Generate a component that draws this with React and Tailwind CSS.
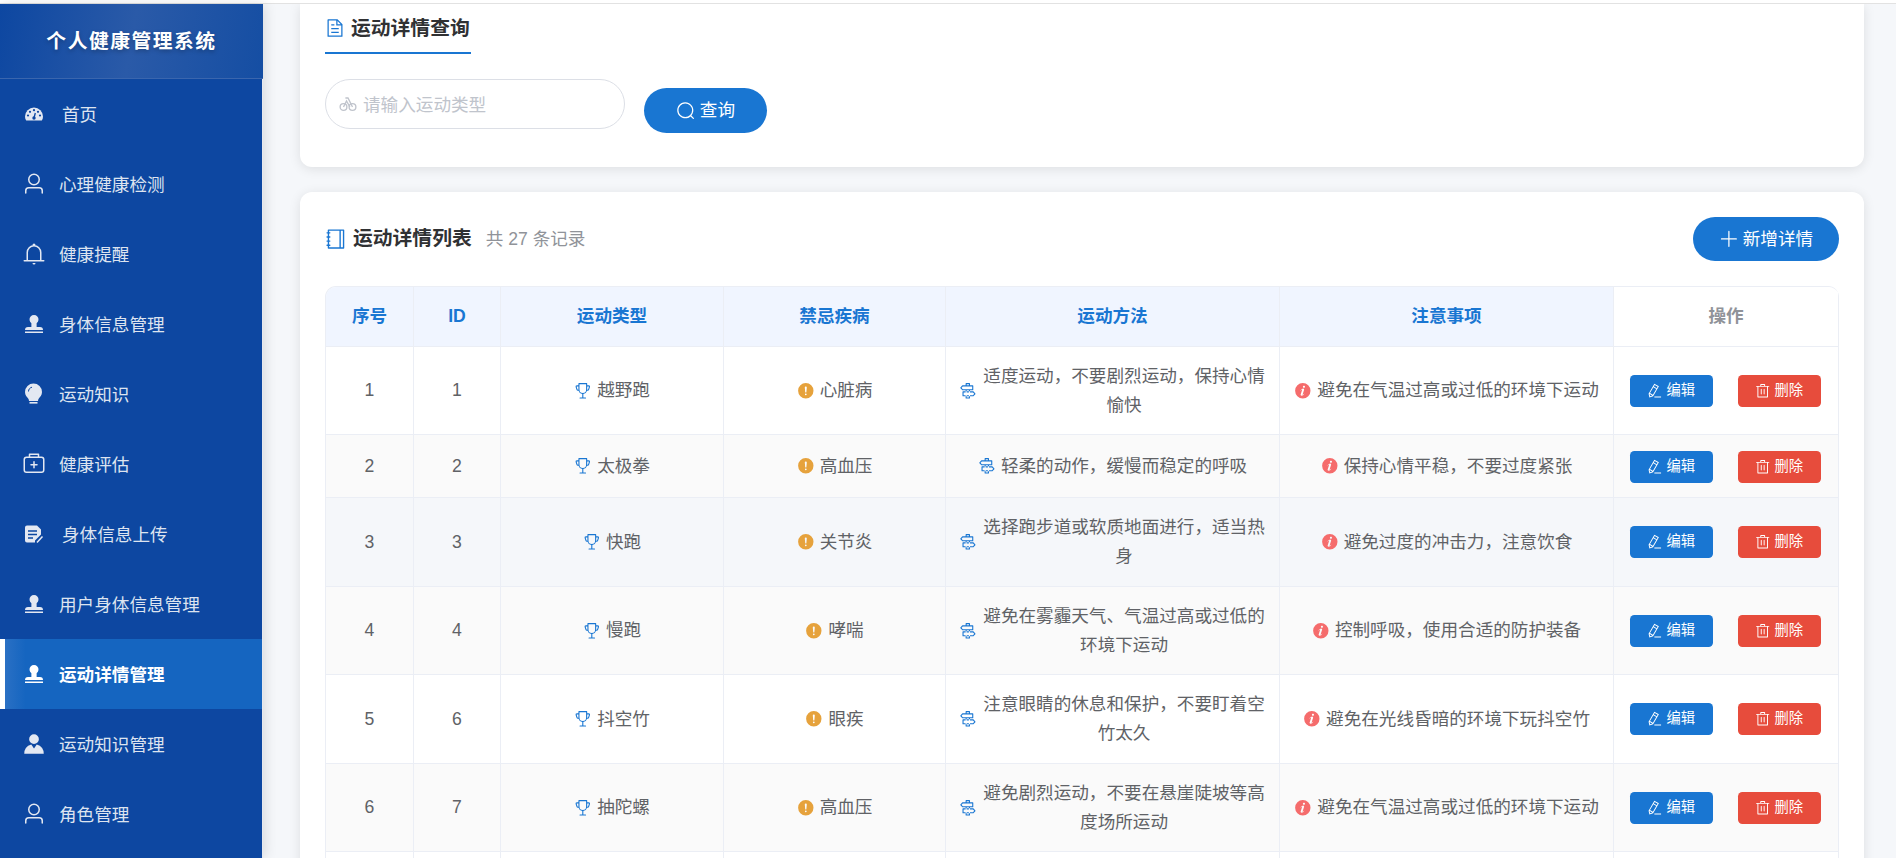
import React from 'react';

const I = {
  search: 'm795.904 750.72 124.992 124.928a32 32 0 0 1-45.248 45.248L750.656 795.904a416 416 0 1 1 45.248-45.248zM480 832a352 352 0 1 0 0-704 352 352 0 0 0 0 704z',
  plus: 'M480 480V128a32 32 0 0 1 64 0v352h352a32 32 0 1 1 0 64H544v352a32 32 0 1 1-64 0V544H128a32 32 0 0 1 0-64h352z',
  user: 'M512 512a192 192 0 1 0 0-384 192 192 0 0 0 0 384zm0 64a256 256 0 1 1 0-512 256 256 0 0 1 0 512zm320 320v-96a96 96 0 0 0-96-96H288a96 96 0 0 0-96 96v96a32 32 0 1 1-64 0v-96a160 160 0 0 1 160-160h448a160 160 0 0 1 160 160v96a32 32 0 1 1-64 0z',
  bell: 'M512 64a64 64 0 0 1 64 64v64H448v-64a64 64 0 0 1 64-64zM256 768h512V448a256 256 0 1 0-512 0v320zm256-640a320 320 0 0 1 320 320v384H192V448a320 320 0 0 1 320-320zM96 768h832q32 0 32 32t-32 32H96q-32 0-32-32t32-32zm352 128h128a64 64 0 0 1-128 0z',
  stamp: 'M624 475.968V640h144a128 128 0 0 1 128 128H128a128 128 0 0 1 128-128h144V475.968a192 192 0 1 1 224 0zM128 896v-64h768v64H128z',
  kit: 'M192 256a64 64 0 0 0-64 64v448a64 64 0 0 0 64 64h640a64 64 0 0 0 64-64V320a64 64 0 0 0-64-64H192zm0-64h640a128 128 0 0 1 128 128v448a128 128 0 0 1-128 128H192A128 128 0 0 1 64 768V320a128 128 0 0 1 128-128zM544 512h96a32 32 0 0 1 0 64h-96v96a32 32 0 0 1-64 0v-96h-96a32 32 0 0 1 0-64h96v-96a32 32 0 0 1 64 0v96zM352 128v64h320v-64H352zm-32-64h384a32 32 0 0 1 32 32v128a32 32 0 0 1-32 32H320a32 32 0 0 1-32-32V96a32 32 0 0 1 32-32z',
  avatar: 'M628.736 528.896A416 416 0 0 1 928 928H96a415.872 415.872 0 0 1 299.264-399.104L512 704l116.736-175.104zM720 304a208 208 0 1 1-416 0 208 208 0 0 1 416 0z',
  doc: 'M832 384H576V128H192v768h640V384zm-26.496-64L640 154.496V320h165.504zM160 64h480l256 256v608a32 32 0 0 1-32 32H160a32 32 0 0 1-32-32V96a32 32 0 0 1 32-32zm160 448h384v64H320v-64zm0-192h160v64H320v-64zm0 384h384v64H320v-64z',
  notebook: 'M192 128v768h640V128H192zm-32-64h704a32 32 0 0 1 32 32v832a32 32 0 0 1-32 32H160a32 32 0 0 1-32-32V96a32 32 0 0 1 32-32zM672 128h64v768h-64zM96 192h128q32 0 32 32t-32 32H96q-32 0-32-32t32-32zm0 192h128q32 0 32 32t-32 32H96q-32 0-32-32t32-32zm0 192h128q32 0 32 32t-32 32H96q-32 0-32-32t32-32zm0 192h128q32 0 32 32t-32 32H96q-32 0-32-32t32-32z',
  trophy: 'M480 896V702.08A256.256 256.256 0 0 1 264.064 512h-32.64a96 96 0 0 1-91.968-68.416L93.632 290.88a76.8 76.8 0 0 1 73.6-98.88H256V96a32 32 0 0 1 32-32h448a32 32 0 0 1 32 32v96h88.768a76.8 76.8 0 0 1 73.6 98.88L884.48 443.52A96 96 0 0 1 792.576 512h-32.64A256.256 256.256 0 0 1 544 702.08V896h128a32 32 0 1 1 0 64H352a32 32 0 1 1 0-64h128zm224-448V128H320v320a192 192 0 1 0 384 0zm64 0h24.576a32 32 0 0 0 30.656-22.784l45.824-152.768A12.8 12.8 0 0 0 856.768 256H768v192zm-512 0V256h-88.768a12.8 12.8 0 0 0-12.288 16.448l45.824 152.768A32 32 0 0 0 231.424 448H256z',
  warn: 'M512 64a448 448 0 1 1 0 896 448 448 0 0 1 0-896zm0 192a58.432 58.432 0 0 0-58.24 63.744l23.36 256.384a35.072 35.072 0 0 0 69.76 0l23.296-256.384A58.432 58.432 0 0 0 512 256zm0 512a51.2 51.2 0 1 0 0-102.4 51.2 51.2 0 0 0 0 102.4z',
  info: 'M512 64a448 448 0 1 1-.001 895.999A448 448 0 0 1 512 64zm67.2 275.072c33.28 0 60.288-23.104 60.288-57.344s-27.072-57.344-60.288-57.344c-33.28 0-60.16 23.104-60.16 57.344s26.88 57.344 60.16 57.344zM590.912 699.2c0-6.848 2.368-24.64 1.024-34.752l-52.608 60.544c-10.88 11.456-24.512 19.392-30.912 17.28a12.992 12.992 0 0 1-8.256-14.72l87.68-276.992c7.168-35.136-12.544-67.2-54.336-71.296-44.096 0-108.992 44.736-148.48 101.504 0 6.784-1.28 23.68.064 33.792l52.544-60.608c10.88-11.328 23.552-19.328 29.952-17.152a12.8 12.8 0 0 1 7.808 16.128L388.48 728.576c-10.048 32.256 8.96 63.872 55.104 71.04 67.904 0 108-43.68 147.456-100.416z',
  guide: 'M640 608h-64V416h64v192zm0 160v160a32 32 0 0 1-32 32H416a32 32 0 0 1-32-32V768h64v128h128V768h64zM384 608V416h64v192h-64zm256-352h-64V128H448v128h-64V96a32 32 0 0 1 32-32h192a32 32 0 0 1 32 32v160zM220.8 256l-71.232 80 71.168 80H768V256H220.8zm-14.4-64H800a32 32 0 0 1 32 32v224a32 32 0 0 1-32 32H206.4a32 32 0 0 1-23.936-10.752l-99.584-112a32 32 0 0 1 0-42.496l99.584-112A32 32 0 0 1 206.4 192zm678.784 496-71.104 80H266.816V608h547.2l71.168 80zm-56.768-144H234.88a32 32 0 0 0-32 32v224a32 32 0 0 0 32 32h593.6a32 32 0 0 0 23.936-10.752l99.584-112a32 32 0 0 0 0-42.496l-99.584-112A32 32 0 0 0 828.48 544z',
  pen: 'm199.04 672.64 193.984 112 224-387.968-193.92-112-224 388.032zm-23.872 60.16 32.896 148.288 144.896-45.696L175.168 732.8zM455.04 229.248l193.92 112 56.704-98.112-193.984-112-56.64 98.112zM104.32 708.8l384-665.024 304.768 175.936L409.152 884.8h.064l-248.448 78.336L104.32 708.8zm384 254.272v-64h448v64h-448z',
  trash: 'M160 256H96a32 32 0 0 1 0-64h256V95.936a32 32 0 0 1 32-32h256a32 32 0 0 1 32 32V192h256a32 32 0 1 1 0 64h-64v672a32 32 0 0 1-32 32H192a32 32 0 0 1-32-32V256zm448-64v-64H416v64h192zM224 896h576V256H224v640zm192-128a32 32 0 0 1-32-32V416a32 32 0 0 1 64 0v320a32 32 0 0 1-32 32zm192 0a32 32 0 0 1-32-32V416a32 32 0 0 1 64 0v320a32 32 0 0 1-32 32z',
};

const Ico = ({ d, className }) => (
  <svg viewBox="0 0 1024 1024" fill="currentColor" className={className}>
    <path d={d} />
  </svg>
);

const Gauge = () => (
  <svg viewBox="0 0 24 24" className="w-[24px] h-[24px] shrink-0">
    <path fill="#e3e8f2" d="M12 5.500A9 9 0 0 0 3 14.500c0 1.600.4 2.900 1.200 4h15.600c.8-1.100 1.200-2.400 1.200-4a9 9 0 0 0-9-9z" />
    <g fill="#0d47a1">
      <circle cx="6" cy="13.500" r="1.100" />
      <circle cx="8" cy="9.800" r="1.100" />
      <circle cx="12" cy="8.200" r="1.100" />
      <circle cx="16" cy="9.800" r="1.100" />
      <circle cx="18" cy="13.500" r="1.100" />
      <circle cx="12" cy="16" r="1.700" />
    </g>
    <path d="M12 16l1.300-5" stroke="#0d47a1" strokeWidth="1.300" />
  </svg>
);

const Bulb = () => (
  <svg viewBox="0 0 24 24" className="w-[24px] h-[24px] shrink-0">
    <path fill="#e3e8f2" d="M11.500 1.500A8.500 8.500 0 0 0 3 10c0 3.200 2 5 3.200 6.500.6.800.8 1.500.8 2.500h9c0-1 .2-1.700.8-2.500C18 15 20 13.200 20 10a8.500 8.500 0 0 0-8.500-8.500z" />
    <rect x="7.500" y="20" width="8" height="1.600" fill="#e3e8f2" />
    <path d="M6.500 9.500c0-2.200 1.400-3.800 3.500-4.300" stroke="#0d47a1" strokeWidth="1" fill="none" />
  </svg>
);

const DocFill = () => (
  <svg viewBox="0 0 24 24" className="w-[24px] h-[24px] shrink-0">
    <path fill="#e3e8f2" d="M5 3.500h10l4 4v5l-6 6v2H5a2 2 0 0 1-2-2v-13a2 2 0 0 1 2-2z" />
    <path d="M6 9h9M6 12.500h9M6 16h5" stroke="#0d47a1" strokeWidth="1.500" />
    <path d="M15 20.500l5.500-6" stroke="#e3e8f2" strokeWidth="1.500" />
  </svg>
);

const Bike = ({ className }) => (
  <svg viewBox="0 0 24 24" fill="none" stroke="currentColor" strokeWidth="1.800" className={className}>
    <circle cx="6" cy="16" r="4.500" />
    <circle cx="18" cy="16" r="4.500" />
    <path d="M6 16l4-8 4.500 8M8.500 4h3.500l6 12" />
  </svg>
);

const navIcon = 'w-[24px] h-[24px] shrink-0 text-[#e3e8f2]';

const nav = [
  { t: '首页', icon: <Gauge />, gap: 'gap-[16px]' },
  { t: '心理健康检测', icon: <Ico d={I.user} className={navIcon} /> },
  { t: '健康提醒', icon: <Ico d={I.bell} className={navIcon} /> },
  { t: '身体信息管理', icon: <Ico d={I.stamp} className={navIcon} /> },
  { t: '运动知识', icon: <Bulb /> },
  { t: '健康评估', icon: <Ico d={I.kit} className={navIcon} /> },
  { t: '身体信息上传', icon: <DocFill />, gap: 'gap-[16px]' },
  { t: '用户身体信息管理', icon: <Ico d={I.stamp} className={navIcon} /> },
  { t: '运动详情管理', icon: <Ico d={I.stamp} className="w-[24px] h-[24px] shrink-0 text-white" />, active: true },
  { t: '运动知识管理', icon: <Ico d={I.avatar} className={navIcon} /> },
  { t: '角色管理', icon: <Ico d={I.user} className={navIcon} /> },
];

const rows = [
  { n: 1, id: 1, type: '越野跑', dis: '心脏病', way: '适度运动，不要剧烈运动，保持心情愉快', note: '避免在气温过高或过低的环境下运动', h: 'h-[88px]', bg: 'bg-white', act: 'pt-[1px]' },
  { n: 2, id: 2, type: '太极拳', dis: '高血压', way: '轻柔的动作，缓慢而稳定的呼吸', note: '保持心情平稳，不要过度紧张', h: 'h-[63px]', bg: 'bg-[#fafafa]', act: 'pt-[1px]' },
  { n: 3, id: 3, type: '快跑', dis: '关节炎', way: '选择跑步道或软质地面进行，适当热身', note: '避免过度的冲击力，注意饮食', h: 'h-[89px]', bg: 'bg-[#f5f7fa]', act: 'pt-0' },
  { n: 4, id: 4, type: '慢跑', dis: '哮喘', way: '避免在雾霾天气、气温过高或过低的环境下运动', note: '控制呼吸，使用合适的防护装备', h: 'h-[88px]', bg: 'bg-[#fafafa]', act: 'pt-[1px]' },
  { n: 5, id: 6, type: '抖空竹', dis: '眼疾', way: '注意眼睛的休息和保护，不要盯着空竹太久', note: '避免在光线昏暗的环境下玩抖空竹', h: 'h-[89px]', bg: 'bg-white', act: 'pt-0' },
  { n: 6, id: 7, type: '抽陀螺', dis: '高血压', way: '避免剧烈运动，不要在悬崖陡坡等高度场所运动', note: '避免在气温过高或过低的环境下运动', h: 'h-[88px]', bg: 'bg-[#fafafa]', act: 'pt-[1px]' },
];

const th = 'border-r border-b border-[#ebeef5] bg-[#f0f5ff] text-[#1976d2] font-bold text-center align-middle';
const td = 'border-r border-b border-[#ebeef5] text-center align-middle px-[13px]';
const inl = 'flex items-center justify-center gap-[5.5px]';

const ActionButtons = ({ cls }) => (
  <div className={`flex items-center justify-center gap-[25px] pr-[2px] ${cls}`}>
    <button className="w-[83px] h-[32px] rounded-[4.4px] bg-[#1976d2] text-white text-[14.3px] flex items-center justify-center gap-[4px]">
      <Ico d={I.pen} className="w-[15.4px] h-[15.4px]" />
      <span>编辑</span>
    </button>
    <button className="w-[83px] h-[32px] rounded-[4.4px] bg-[#e74c3c] text-white text-[14.3px] flex items-center justify-center gap-[4px]">
      <Ico d={I.trash} className="w-[15.4px] h-[15.4px]" />
      <span>删除</span>
    </button>
  </div>
);

export default function App() {
  return (
    <div className="h-screen flex flex-col overflow-hidden bg-white font-['Liberation_Sans','Noto_Sans_CJK_SC',sans-serif] text-[17.6px]">
      <div className="h-[4px] shrink-0 bg-white border-b border-[#e2e2e2]" />
      <div className="flex flex-1 min-h-0">
        <aside className="w-[263px] shrink-0 flex flex-col z-10 shadow-[2px_0_12px_rgba(0,0,0,0.12)]">
          <div className="h-[75px] shrink-0 flex items-center justify-center pt-[1px] border-b border-[#3a66ae] bg-[linear-gradient(100deg,#0d47a1,#2a5aa8_50%,#154ea3)] text-white font-bold text-[19.8px] tracking-[1.5px] [text-shadow:0_2px_4px_rgba(0,0,0,0.25)]">
            个人健康管理系统
          </div>
          <nav className="flex-1 bg-[#0d47a1] border-r border-[#e6e8ee]">
            {nav.map((item) =>
              item.active ? (
                <div key={item.t} className="h-[70px] flex items-center gap-[13px] pl-[17px] border-l-[5px] border-white bg-[linear-gradient(90deg,#2a70c4,#1565c0_8%)] text-white font-bold">
                  {item.icon}
                  <span className="pt-[2px]">{item.t}</span>
                </div>
              ) : (
                <div key={item.t} className={`h-[70px] flex items-center pl-[22px] text-[#dde4f0] ${item.gap || 'gap-[13px]'}`}>
                  {item.icon}
                  <span className="pt-[2px]">{item.t}</span>
                </div>
              )
            )}
          </nav>
        </aside>

        <main className="flex-1 min-w-0 bg-[#f5f7fa] pl-[37px] pr-[32px] overflow-hidden">
          <section className="h-[163px] bg-white rounded-b-[12px] shadow-[0_2px_12px_rgba(0,0,0,0.1)] px-[25px] pt-[10px]">
            <div className="flex items-center w-[146px] gap-[6px] h-[40px] pb-[10px] border-b-2 border-[#1976d2]">
              <Ico d={I.doc} className="w-[20px] h-[20px] text-[#1976d2]" />
              <span className="pt-[2px] text-[19.8px] font-bold text-[#303133]">运动详情查询</span>
            </div>
            <div className="flex items-start gap-[19px] mt-[25px]">
              <div className="w-[300px] h-[50px] rounded-full border border-[#dcdfe6] flex items-center pl-[13px] gap-[6px] text-[#c0c4cc]">
                <Bike className="w-[18px] h-[18px]" />
                <span className="pt-[2px]">请输入运动类型</span>
              </div>
              <button className="mt-[9px] w-[123px] h-[45px] rounded-full bg-[#1976d2] text-white flex items-center justify-center gap-[4px]">
                <Ico d={I.search} className="w-[19.8px] h-[19.8px]" />
                <span>查询</span>
              </button>
            </div>
          </section>

          <section className="mt-[25px] bg-white rounded-[12px] shadow-[0_2px_12px_rgba(0,0,0,0.1)] px-[25px] pt-[25px] pb-[25px]">
            <div className="flex items-center justify-between h-[44px]">
              <div className="flex items-center">
                <Ico d={I.notebook} className="w-[22px] h-[22px] text-[#1976d2]" />
                <span className="ml-[6px] text-[19.8px] font-bold text-[#303133]">运动详情列表</span>
                <span className="ml-[14px] text-[#909399]">共 27 条记录</span>
              </div>
              <button className="w-[146px] h-[44px] rounded-full bg-[#1976d2] text-white flex items-center justify-center gap-[4px]">
                <Ico d={I.plus} className="w-[19.8px] h-[19.8px]" />
                <span>新增详情</span>
              </button>
            </div>

            <div className="mt-[25px] border-t border-l border-[#ebeef5] rounded-t-[11px] overflow-hidden">
              <table className="w-full table-fixed border-separate border-spacing-0 text-[#606266]">
                <colgroup>
                  <col className="w-[88px]" />
                  <col className="w-[87px]" />
                  <col className="w-[223px]" />
                  <col className="w-[222px]" />
                  <col className="w-[334px]" />
                  <col className="w-[334px]" />
                  <col />
                </colgroup>
                <thead>
                  <tr className="h-[60px]">
                    <th className={th}>序号</th>
                    <th className={th}>ID</th>
                    <th className={th}>运动类型</th>
                    <th className={th}>禁忌疾病</th>
                    <th className={th}>运动方法</th>
                    <th className={th}>注意事项</th>
                    <th className="border-r border-b border-[#ebeef5] bg-white text-[#909399] font-bold text-center align-middle">操作</th>
                  </tr>
                </thead>
                <tbody>
                  {rows.map((r) => (
                    <tr key={r.n} className={`${r.h} ${r.bg}`}>
                      <td className={td}>{r.n}</td>
                      <td className={td}>{r.id}</td>
                      <td className={td}>
                        <div className={inl}>
                          <Ico d={I.trophy} className="w-[17.6px] h-[17.6px] shrink-0 text-[#1976d2]" />
                          <span>{r.type}</span>
                        </div>
                      </td>
                      <td className={td}>
                        <div className={inl}>
                          <Ico d={I.warn} className="w-[17.6px] h-[17.6px] shrink-0 text-[#e6a23c]" />
                          <span>{r.dis}</span>
                        </div>
                      </td>
                      <td className={td}>
                        <div className={inl}>
                          <Ico d={I.guide} className="w-[17.6px] h-[17.6px] shrink-0 text-[#1976d2]" />
                          <span className="leading-[29px]">{r.way}</span>
                        </div>
                      </td>
                      <td className={td}>
                        <div className={inl}>
                          <Ico d={I.info} className="w-[17.6px] h-[17.6px] shrink-0 text-[#f56c6c]" />
                          <span className="whitespace-nowrap">{r.note}</span>
                        </div>
                      </td>
                      <td className="border-r border-b border-[#ebeef5] align-middle">
                        <ActionButtons cls={r.act} />
                      </td>
                    </tr>
                  ))}
                  <tr className="h-[88px] bg-white">
                    <td className={td} />
                    <td className={td} />
                    <td className={td} />
                    <td className={td} />
                    <td className={td} />
                    <td className={td} />
                    <td className={td} />
                  </tr>
                </tbody>
              </table>
            </div>
          </section>
        </main>
      </div>
    </div>
  );
}
